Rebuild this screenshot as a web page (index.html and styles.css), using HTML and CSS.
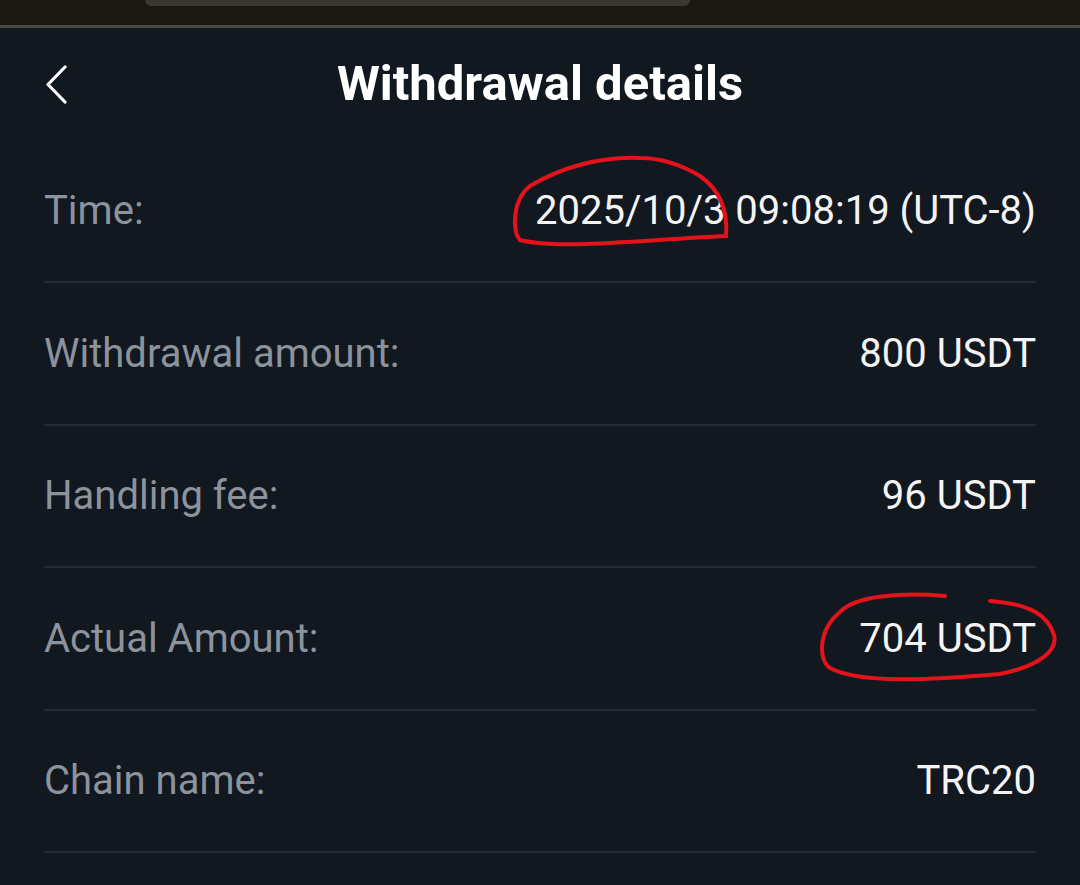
FILE: index.html
```html
<!DOCTYPE html>
<html>
<head>
<meta charset="utf-8">
<link rel="stylesheet" href="styles.css">
</head>
<body>
<div class="statusbar"><div class="pill"></div></div>
<div class="page">
  <header class="header">
    <svg class="back" width="24" height="40" viewBox="0 0 24 40"><path d="M20 3 L3 20.5 L20 38" fill="none" stroke="#fff" stroke-width="3.2" stroke-linecap="round" stroke-linejoin="round"/></svg>
    <h1 class="title">Withdrawal details</h1>
  </header>
  <div class="list">
    <div class="row"><span class="label">Time:</span><span class="value">2025/10/3 09:08:19 (UTC-8)</span></div>
    <div class="row"><span class="label">Withdrawal amount:</span><span class="value">800 USDT</span></div>
    <div class="row"><span class="label">Handling fee:</span><span class="value">96 USDT</span></div>
    <div class="row"><span class="label">Actual Amount:</span><span class="value">704 USDT</span></div>
    <div class="row"><span class="label">Chain name:</span><span class="value">TRC20</span></div>
  </div>
</div>
<svg class="marks" width="1080" height="885" viewBox="0 0 1080 885">
  <path d="M640 158 C600 156 560 168 530 186 C512 200 512 232 520 240 C560 250 640 240 726 236 C728 210 720 190 700 176 C680 164 660 158 640 158" fill="none" stroke="#e3121b" stroke-width="4" stroke-linecap="round"/>
  <path d="M945 596 C900 592 855 596 840 612 C818 630 818 660 830 668 C860 684 930 680 1000 674 C1040 666 1058 650 1054 635 C1048 615 1030 604 990 601" fill="none" stroke="#e3121b" stroke-width="4" stroke-linecap="round"/>
</svg>
</body>
</html>
```
FILE: styles.css
```css
html, body {
  margin: 0;
  padding: 0;
  background: #111820;
  font-family: Roboto, "Liberation Sans", sans-serif;
}
body {
  width: 1080px;
  height: 885px;
  overflow: hidden;
  position: relative;
}
.statusbar {
  background: #1b1812;
  border-bottom: 3px solid #4a4740;
  box-sizing: border-box;
  height: 28px;
}
.pill {
  margin-left: 145px;
  width: 545px;
  height: 6px;
  background: #3a3833;
  border-radius: 0 0 16px 16px;
}
.page {
  padding: 0 44px;
}
.header {
  height: 112px;
  display: flex;
  align-items: center;
  justify-content: center;
  position: relative;
}
.back {
  position: absolute;
  left: 1px;
  top: 36px;
}
.title {
  margin: 0 0 2px 0;
  color: #ffffff;
  font-size: 49px;
  font-weight: 700;
}
.list {
  display: flex;
  flex-direction: column;
}
.row {
  height: 142.5px;
  box-sizing: border-box;
  border-bottom: 2px solid #232b34;
  display: flex;
  align-items: center;
  justify-content: space-between;
  font-size: 40px;
}
.row:first-child {
  height: 143px;
}
.label {
  color: #8c939c;
}
.value {
  color: #f4f4f4;
}
.marks {
  position: absolute;
  left: 0;
  top: 0;
  pointer-events: none;
}
```
